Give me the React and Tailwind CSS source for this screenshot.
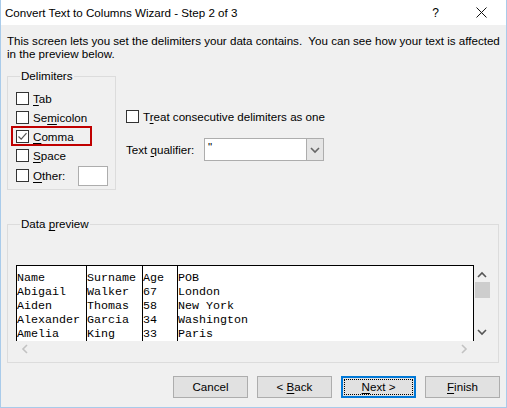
import React from "react";

const ui = { fontFamily: '"Liberation Sans", Arial, sans-serif' };
const mono = { fontFamily: '"Liberation Mono", "Courier New", monospace' };

const preview = [
  ["Name", "Abigail", "Aiden", "Alexander", "Amelia"],
  ["Surname", "Walker", "Thomas", "Garcia", "King"],
  ["Age", "67", "58", "34", "33"],
  ["POB", "London", "New York", "Washington", "Paris"],
];

const colClass = [
  "w-[69px]",
  "w-[56px] border-l border-black",
  "w-[35px] border-l border-black",
  "flex-1 border-l border-black",
];

function Mn({ children }) {
  return <span className="underline underline-offset-[2px] decoration-[1px]">{children}</span>;
}

function Box({ checked }) {
  return (
    <span className="flex h-[13px] w-[13px] shrink-0 items-center justify-center border border-[#333333] bg-white">
      {checked && (
        <svg width="11" height="11" viewBox="0 0 11 11">
          <path d="M1.5 5.5 L4.2 8.2 L9.5 2.2" fill="none" stroke="#555" strokeWidth="1.2" />
        </svg>
      )}
    </span>
  );
}

function Check({ checked, children }) {
  return (
    <div className="flex h-[19px] items-center gap-[4px] whitespace-nowrap">
      <Box checked={checked} />
      <span>{children}</span>
    </div>
  );
}

function Button({ children, focused }) {
  return (
    <button
      className={`relative flex h-[22px] w-[75px] items-center justify-center bg-[#e1e1e1] ${
        focused ? "border-2 border-[#0078d7]" : "border border-[#adadad]"
      }`}
    >
      {focused && <span className="absolute inset-[1px] border border-dotted border-black" />}
      <span className="relative">{children}</span>
    </button>
  );
}

function Chevron({ dir, color = "#555" }) {
  const d = {
    up: "M1 6 L5 2 L9 6",
    down: "M1 2 L5 6 L9 2",
    left: "M6 1 L2 5 L6 9",
    right: "M2 1 L6 5 L2 9",
  }[dir];
  const vertical = dir === "up" || dir === "down";
  return (
    <svg width={vertical ? 10 : 8} height={vertical ? 8 : 10} viewBox={vertical ? "0 0 10 8" : "0 0 8 10"}>
      <path d={d} fill="none" stroke={color} strokeWidth="1.6" />
    </svg>
  );
}

export default function App() {
  return (
    <div
      className="flex h-[408px] w-[507px] flex-col border-x border-b border-[#a9cbea] bg-[#f0f0f0] text-[11.6px] leading-[16px] text-black"
      style={ui}
    >
      {/* title bar */}
      <div className="flex h-[25px] shrink-0 items-center bg-white pl-[4px]">
        <span className="flex-1">Convert Text to Columns Wizard - Step 2 of 3</span>
        <span className="mr-[37px] text-[12px]">?</span>
        <svg width="11" height="11" viewBox="0 0 11 11" className="mr-[19px]">
          <path d="M0.5 0.5 L10.5 10.5 M10.5 0.5 L0.5 10.5" stroke="#111" strokeWidth="1" />
        </svg>
      </div>

      <p className="mt-[9px] whitespace-nowrap pl-[6px] leading-[13px]">
        This screen lets you set the delimiters your data contains.&nbsp; You can see how your text is affected
        <br />
        in the preview below.
      </p>

      <div className="mt-[8px] flex pl-[6px]">
        <fieldset className="h-[122px] w-[109px] border border-[#dcdcdc] pl-[8px]">
          <legend className="ml-[4px] px-[1px]">Delimiters</legend>
          <div className="mt-[5px] flex flex-col">
            <Check><Mn>T</Mn>ab</Check>
            <Check>Se<Mn>m</Mn>icolon</Check>
            <div className="relative">
              <Check checked><Mn>C</Mn>omma</Check>
              <span className="absolute left-[-5px] top-[-1px] h-[20px] w-[81px] border-2 border-[#c00000]" />
            </div>
            <Check><Mn>S</Mn>pace</Check>
            <div className="flex h-[21px] items-center gap-[4px]">
              <Box />
              <span><Mn>O</Mn>ther:</span>
              <span className="ml-[9px] h-[20px] w-[30px] border border-[#adadad] bg-white" />
            </div>
          </div>
        </fieldset>

        <div className="ml-[10px] flex flex-col pt-[39px]">
          <Check>T<Mn>r</Mn>eat consecutive delimiters as one</Check>
          <div className="mt-[12px] flex items-center">
            <span className="w-[78px]">Text <Mn>q</Mn>ualifier:</span>
            <div className="flex h-[23px] w-[120px] border border-[#adadad] bg-white">
              <span className="flex-1 pl-[3px] pt-[2px] leading-[12px]">"</span>
              <span className="flex w-[17px] items-center justify-center border-l border-[#adadad] bg-[#e5e5e5]">
                <Chevron dir="down" color="#666" />
              </span>
            </div>
          </div>
        </div>
      </div>

      <fieldset className="ml-[6px] mt-[26px] h-[147px] w-[492px] border border-[#dcdcdc] pl-[8px]">
        <legend className="ml-[4px] px-[1px]">
          Data <Mn>p</Mn>review
        </legend>
        <div className="mt-[33px] flex">
          <div className="flex h-[76px] w-[458px] border-x border-t border-black bg-white" style={mono}>
            {preview.map((col, i) => (
              <div key={col[0]} className={`flex flex-col pt-[5px] text-[11.67px] leading-[14px] ${colClass[i]}`}>
                {col.map((cell) => (
                  <span key={cell} className="whitespace-pre">{cell}</span>
                ))}
              </div>
            ))}
          </div>
          {/* vertical scrollbar */}
          <div className="flex h-[76px] w-[16px] flex-col items-center pt-[6px]">
            <Chevron dir="up" />
            <span className="mt-[3px] h-[16px] w-[15px] bg-[#cdcdcd]" />
            <span className="mt-auto mb-[5px]">
              <Chevron dir="down" />
            </span>
          </div>
        </div>
        {/* horizontal scrollbar */}
        <div className="flex h-[16px] w-[458px] items-center justify-between pl-[5px] pr-[6px]">
          <Chevron dir="left" color="#c2c2c2" />
          <Chevron dir="right" color="#c2c2c2" />
        </div>
      </fieldset>

      <div className="mt-[13px] flex justify-end gap-[9px] pr-[6px]">
        <Button>Cancel</Button>
        <Button>&lt; <Mn>B</Mn>ack</Button>
        <Button focused><Mn>N</Mn>ext &gt;</Button>
        <Button><Mn>F</Mn>inish</Button>
      </div>
    </div>
  );
}
